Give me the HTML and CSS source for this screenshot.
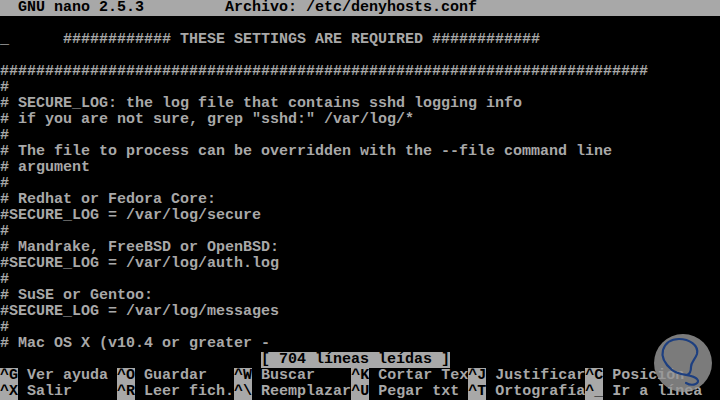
FILE: index.html
```
<!DOCTYPE html>
<html lang="es">
<head>
<meta charset="utf-8">
<title>GNU nano</title>
<link rel="stylesheet" href="styles.css">
</head>
<body>
<div class="screen">
<div class="row title">  GNU nano 2.5.3         Archivo: /etc/denyhosts.conf</div>
<div class="row"> </div>
<div class="row"><span class="cursor">_</span>      ############ THESE SETTINGS ARE REQUIRED ############</div>
<div class="row"> </div>
<div class="row">########################################################################</div>
<div class="row">#</div>
<div class="row"># SECURE_LOG: the log file that contains sshd logging info</div>
<div class="row"># if you are not sure, grep "sshd:" /var/log/*</div>
<div class="row">#</div>
<div class="row"># The file to process can be overridden with the --file command line</div>
<div class="row"># argument</div>
<div class="row">#</div>
<div class="row"># Redhat or Fedora Core:</div>
<div class="row">#SECURE_LOG = /var/log/secure</div>
<div class="row">#</div>
<div class="row"># Mandrake, FreeBSD or OpenBSD:</div>
<div class="row">#SECURE_LOG = /var/log/auth.log</div>
<div class="row">#</div>
<div class="row"># SuSE or Gentoo:</div>
<div class="row">#SECURE_LOG = /var/log/messages</div>
<div class="row">#</div>
<div class="row"># Mac OS X (v10.4 or greater -</div>
<div class="row">                             <span class="inv">[ 704 líneas leídas ]</span></div>
<div class="row"><span class="inv">^G</span> Ver ayuda <span class="inv">^O</span> Guardar   <span class="inv">^W</span> Buscar    <span class="inv">^K</span> Cortar Tex<span class="inv">^J</span> Justificar<span class="inv">^C</span> Posición</div>
<div class="row"><span class="inv">^X</span> Salir     <span class="inv">^R</span> Leer fich.<span class="inv">^\</span> Reemplazar<span class="inv">^U</span> Pegar txt <span class="inv">^T</span> Ortografía<span class="inv">^_</span> Ir a línea</div>
</div>
<svg class="logo" width="60" height="60" viewBox="0 0 60 60" aria-hidden="true">
  <circle cx="30" cy="30" r="29" fill="rgba(150,150,150,0.82)"/>
  <path d="M33,50 C40,54 48,50 44,46 C40,41 26,43 19,37 C12,31 8,24 10,17 C13,8 20,6 26,6 C36,6 46,12 44,21 C42,27 38,29 38,34 C38,38 37,41 34,42" fill="none" stroke="#1d3f80" stroke-width="2.2" stroke-linecap="round"/>
</svg>
</body>
</html>
```
FILE: styles.css
```
html, body {
  margin: 0;
  padding: 0;
  background: #000;
}
body {
  width: 720px;
  height: 400px;
  overflow: hidden;
  position: relative;
}
.screen {
  display: grid;
  grid-template-rows: repeat(25, 16px);
  font-family: "Liberation Mono", "DejaVu Sans Mono", monospace;
  font-size: 15px;
  font-weight: bold;
  line-height: 16px;
  color: #a8a8a8;
}
.row {
  white-space: pre;
  height: 16px;
  overflow: hidden;
}
.title {
  background: #a8a8a8;
  color: #000;
}
.inv {
  background: #a8a8a8;
  color: #000;
}
.cursor {
  color: #e0e0e0;
}
.logo {
  position: absolute;
  left: 653px;
  top: 333px;
}
```
